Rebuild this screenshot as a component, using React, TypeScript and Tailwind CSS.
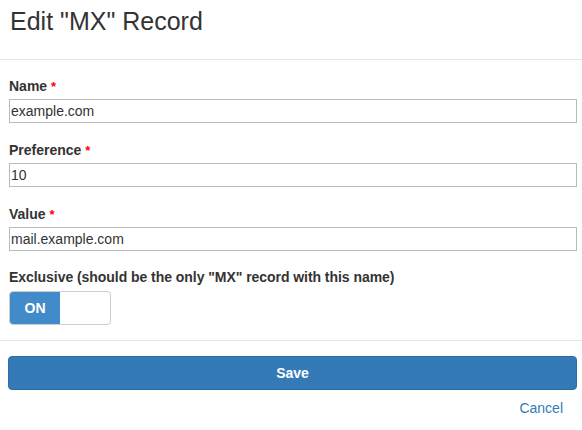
// @ts-nocheck
import React, { useState } from 'react';

const fields = [
  { id: 'name', label: 'Name', value: 'example.com' },
  { id: 'preference', label: 'Preference', value: '10' },
  { id: 'value', label: 'Value', value: 'mail.example.com' },
];

const App = () => {
  const [exclusive, setExclusive] = useState(true);

  return (
    <div className="w-[582px] h-[430px] bg-white text-[#333] font-['Liberation_Sans',Arial,sans-serif]">
      {/* Header */}
      <div className="h-[60px] border-b border-[#e5e5e5] px-[10px] pt-[5px]">
        <h1 className="text-[25px] leading-[32px] font-normal text-[#333]">Edit "MX" Record</h1>
      </div>

      {/* Form body */}
      <div className="px-[9px] pt-[16px] pb-[15px] border-b border-[#e5e5e5]">
        {fields.map((f) => (
          <div key={f.id} className="mb-[17px]">
            <label className="block h-[20px] text-[14px] leading-[20px] font-bold mb-[3px]">
              {f.label} <span className="text-[#f00] text-[13px] leading-[0]">*</span>
            </label>
            <input
              defaultValue={f.value}
              className="block w-[568px] h-[24px] border border-[#bbb] px-[1px] text-[14px] text-[#333] outline-none"
            />
          </div>
        ))}

        <label className="block text-[14px] leading-[20px] font-bold mb-[4px] -mt-[1px] tracking-[-0.05px]">
          Exclusive (should be the only "MX" record with this name)
        </label>
        <button
          onClick={() => setExclusive(!exclusive)}
          className="flex w-[102px] h-[34px] border border-[#ccc] rounded-[4px] overflow-hidden bg-white"
        >
          <span
            className={`w-[50px] h-full flex items-center justify-center text-[14px] font-bold ${
              exclusive ? 'bg-[#428bca] text-white' : 'bg-white text-transparent'
            }`}
          >
            ON
          </span>
        </button>
      </div>

      {/* Footer */}
      <div className="px-[8px] pt-[15px]">
        <button className="w-[569px] h-[34px] rounded-[4px] bg-[#337ab7] border border-[#2e6da4] text-white text-[14px] font-bold">
          Save
        </button>
        <div className="flex justify-end pr-[11px] pt-[8px]">
          <a href="#" className="text-[14px] leading-[20px] text-[#337ab7]">
            Cancel
          </a>
        </div>
      </div>
    </div>
  );
};

export default App;
